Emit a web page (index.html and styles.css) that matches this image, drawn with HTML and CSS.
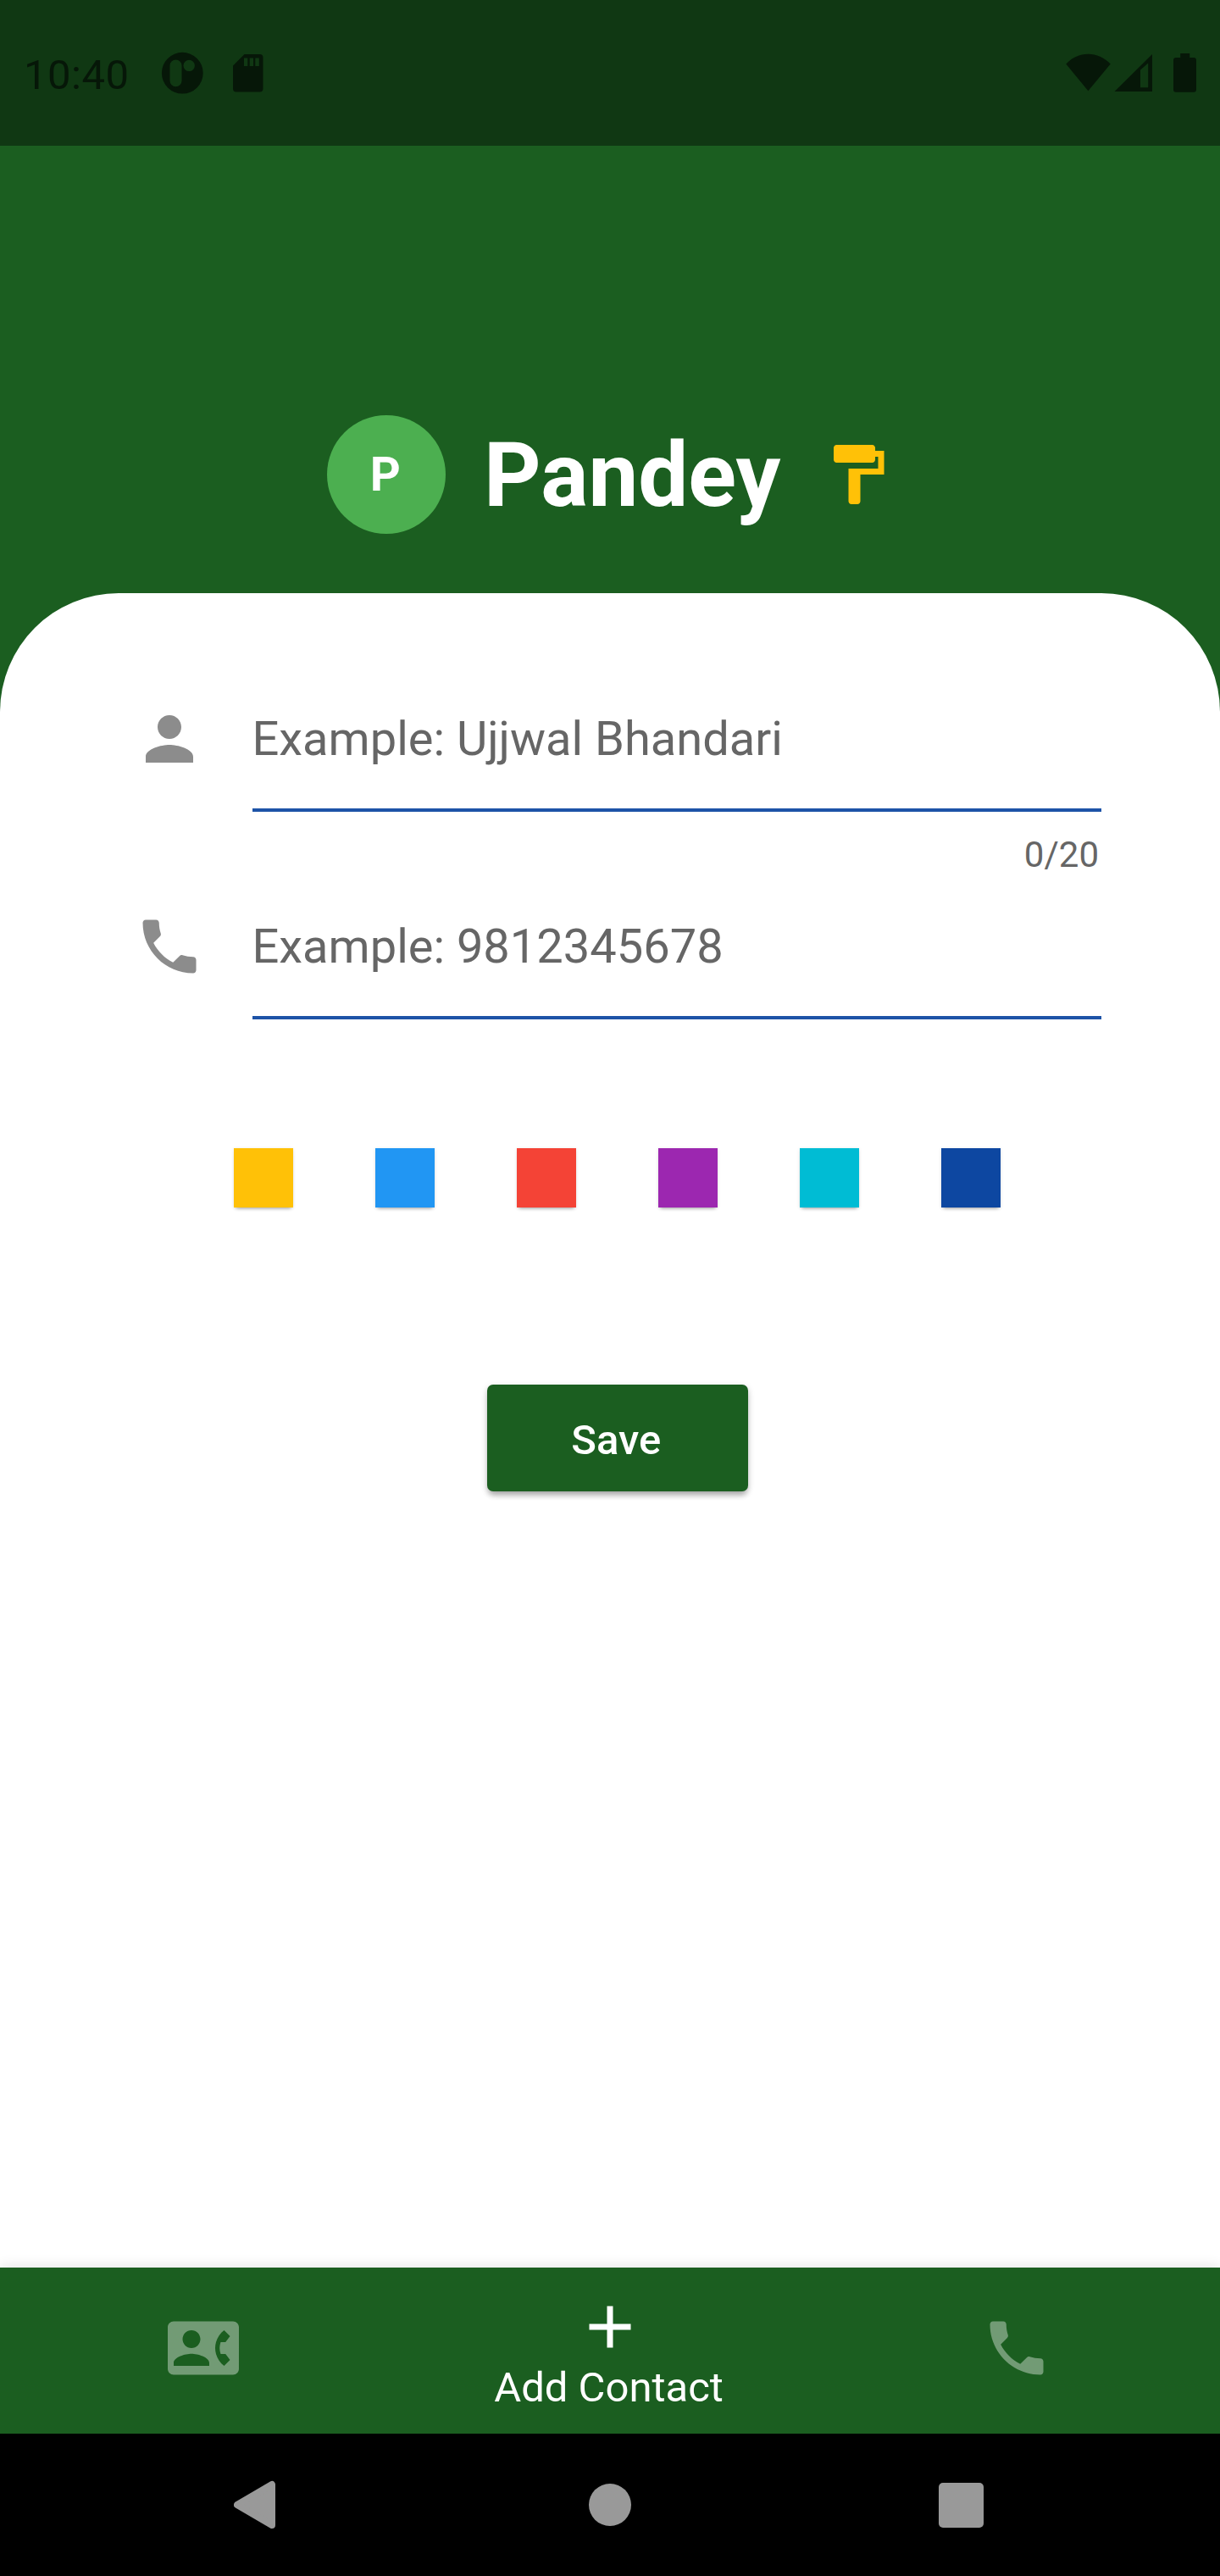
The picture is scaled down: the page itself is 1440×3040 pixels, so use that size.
FILE: index.html
```html
<!DOCTYPE html>
<html lang="en">
<head>
<meta charset="utf-8">
<title>Add Contact</title>
<link rel="stylesheet" href="styles.css">
</head>
<body>
<div class="screen">
  <div class="status-bar">
    <span class="clock">10:40</span>
    <svg class="status-left" width="104" height="50" viewBox="190 61 104 50">
      <path fill-rule="evenodd" d="M215.3 61.8a24.4 24.4 0 1 0 0 48.8a24.4 24.4 0 0 0 0-48.8zM207.5 70.5a7 7 0 0 1 7 7v17.800a7 7 0 0 1-14 0V77.500a7 7 0 0 1 7-7zM223.200 70.700a6.700 6.700 0 1 1 0 13.400a6.700 6.700 0 0 1 0-13.400z"/>
    </svg>
    <svg class="status-sd" width="36" height="46" viewBox="0 0 36 46">
      <path fill-rule="evenodd" d="M13.500 0H31.500A4 4 0 0 1 35.500 4V40.500A4 4 0 0 1 31.500 44.500H4A4 4 0 0 1 0 40.500V13.500zM13 4.500V14h4.300V4.500zM19.700 4.500V14H24V4.500zM26.300 4.500V14h4.500V4.500z"/>
    </svg>
    <svg class="status-right" width="154" height="46" viewBox="1258 63 154 46">
      <path d="M1258.300 75.500C1273 59.700 1296 59.700 1310.700 75.500L1284.400 107.300z"/>
      <path fill-rule="evenodd" d="M1315.500 108L1360 64V108zM1346 82.500V103.300H1355.200V74.500z"/>
      <path d="M1393.200 63h11v5H1409a3 3 0 0 1 3 3V105.800a3 3 0 0 1-3 3H1388a3 3 0 0 1-3-3V71a3 3 0 0 1 3-3H1393.200z"/>
    </svg>
  </div>

  <header class="header">
    <div class="avatar">P</div>
    <h1 class="title">Pandey</h1>
    <svg class="icon roller" viewBox="0 0 24 24"><path d="M18 4V3c0-.55-.45-1-1-1H5c-.55 0-1 .45-1 1v4c0 .55.45 1 1 1h12c.55 0 1-.45 1-1V6h1v4H9v11c0 .55.45 1 1 1h2c.55 0 1-.45 1-1v-9h8V4h-3z"/></svg>
  </header>

  <main class="panel">
    <div class="row">
      <svg class="icon field-icon" viewBox="0 0 24 24"><path d="M12 12c2.210 0 4-1.790 4-4s-1.790-4-4-4-4 1.790-4 4 1.790 4 4 4zm0 2c-2.670 0-8 1.340-8 4v2h16v-2c0-2.660-5.330-4-8-4z"/></svg>
      <div class="field">
        <div class="hint">Example: Ujjwal Bhandari</div>
        <div class="counter">0/20</div>
      </div>
    </div>
    <div class="row">
      <svg class="icon field-icon" viewBox="0 0 24 24"><path d="M6.620 10.790c1.440 2.830 3.760 5.140 6.590 6.590l2.200-2.200c.27-.27.67-.36 1.020-.24 1.120.37 2.330.57 3.570.57.55 0 1 .45 1 1V20c0 .55-.45 1-1 1-9.390 0-17-7.610-17-17 0-.55.45-1 1-1h3.500c.55 0 1 .45 1 1 0 1.250.2 2.450.57 3.570.11.35.03.74-.25 1.020l-2.200 2.200z"/></svg>
      <div class="field">
        <div class="hint">Example: 9812345678</div>
      </div>
    </div>
    <div class="swatches">
      <span class="swatch amber"></span>
      <span class="swatch blue"></span>
      <span class="swatch red"></span>
      <span class="swatch purple"></span>
      <span class="swatch cyan"></span>
      <span class="swatch navy"></span>
    </div>
    <button class="save" type="button">Save</button>
  </main>

  <nav class="tabs">
    <div class="tab">
      <svg class="icon" viewBox="0 0 24 24"><path d="M22 3H2C.9 3 0 3.900 0 5v14c0 1.100.9 2 2 2h20c1.100 0 1.990-.9 1.990-2L24 5c0-1.100-.9-2-2-2zM8 6c1.660 0 3 1.340 3 3s-1.340 3-3 3-3-1.340-3-3 1.340-3 3-3zm6 12H2v-1c0-2 4-3.100 6-3.100s6 1.100 6 3.100v1zm3.850-4h1.640L21 16l-1.990 1.990c-1.310-.98-2.280-2.380-2.730-3.990-.18-.64-.28-1.310-.28-2s.1-1.360.28-2c.45-1.620 1.420-3.010 2.730-3.990L21 8l-1.510 2h-1.640c-.22.63-.35 1.300-.35 2s.13 1.370.35 2z"/></svg>
    </div>
    <div class="tab active">
      <svg class="icon" viewBox="0 0 24 24"><path d="M19 13h-6v6h-2v-6H5v-2h6V5h2v6h6v2z"/></svg>
      <span class="tab-label">Add Contact</span>
    </div>
    <div class="tab">
      <svg class="icon" viewBox="0 0 24 24"><path d="M6.620 10.790c1.440 2.830 3.760 5.140 6.590 6.590l2.200-2.200c.27-.27.67-.36 1.020-.24 1.120.37 2.330.57 3.570.57.55 0 1 .45 1 1V20c0 .55-.45 1-1 1-9.390 0-17-7.610-17-17 0-.55.45-1 1-1h3.500c.55 0 1 .45 1 1 0 1.250.2 2.450.57 3.570.11.35.03.74-.25 1.020l-2.200 2.200z"/></svg>
    </div>
  </nav>

  <div class="system-nav">
    <svg width="50" height="58" viewBox="0 0 50 58"><path d="M4 29L45 5V53z" stroke-width="8" stroke-linejoin="round"/></svg>
    <span class="home"></span>
    <span class="recents"></span>
  </div>
</div>
</body>
</html>
```
FILE: styles.css
```css
* { box-sizing: border-box; }

body {
  margin: 0;
  font-family: Roboto, "Liberation Sans", sans-serif;
}

.screen {
  width: 1440px;
  height: 3040px;
  display: flex;
  flex-direction: column;
  overflow: hidden;
  background: #1b5e20;
}

.status-bar {
  height: 172px;
  flex: none;
  display: flex;
  align-items: flex-start;
  padding: 61px 28px 0;
  background: #103813;
  color: #061708;
  fill: #061708;
}

.clock {
  width: 162px;
  font-size: 49px;
  line-height: 56px;
  letter-spacing: .5px;
}

.status-left,
.status-right,
.status-sd { display: block; flex: none; }
.status-left { margin-right: -19px; }
.status-sd { margin-top: 3px; }
.status-right { margin: 2px 0 0 auto; }

.icon {
  display: block;
  width: 84px;
  height: 84px;
  flex: none;
}

.header {
  height: 528px;
  flex: none;
  display: flex;
  align-items: center;
  padding: 248px 0 0 385.700px;
}

.avatar {
  width: 140px;
  height: 140px;
  display: flex;
  align-items: center;
  justify-content: center;
  padding-right: 2px;
  border-radius: 50%;
  background: #4caf50;
  color: #fff;
  font-size: 56px;
  font-weight: 700;
}

.title {
  width: 398.600px;
  margin: 0 0 0 45.400px;
  padding-top: 2px;
  color: #fff;
  font-size: 105px;
  line-height: 123px;
  font-weight: 700;
}

.roller { fill: #ffc107; }

.panel {
  flex: 1;
  display: flex;
  flex-direction: column;
  padding: 87px 140px 0 157.500px;
  border-radius: 140px 140px 0 0;
  background: #fff;
}

.row {
  height: 245px;
  display: flex;
  gap: 56px;
}

.field-icon { margin-top: 43px; fill: #8c8c8c; }

.field { flex: 1; color: #666; }

.hint {
  height: 171px;
  padding-top: 52px;
  border-bottom: 4px solid #1d53a7;
  font-size: 56px;
  line-height: 66px;
}

.counter {
  margin-top: 26px;
  padding-right: 3px;
  text-align: right;
  font-size: 42px;
  line-height: 49px;
}

.swatches {
  display: flex;
  justify-content: space-between;
  margin-top: 78px;
  padding: 0 118.500px;
}

.swatch {
  width: 70px;
  height: 70px;
  box-shadow: 0 4px 4px -3px rgba(0, 0, 0, .3), 0 1px 4px rgba(0, 0, 0, .12);
}

.amber { background: #ffc107; }
.blue { background: #2196f3; }
.red { background: #f44336; }
.purple { background: #9c27b0; }
.cyan { background: #00bcd4; }
.navy { background: #0d47a1; }

.save {
  width: 308px;
  height: 126px;
  margin: 209.300px auto 0;
  padding: 4px 3px 0 0;
  border: 0;
  border-radius: 7px;
  background: #1b5e20;
  box-shadow: 0 7px 7px -3px rgba(0, 0, 0, .2), 0 4px 7px rgba(0, 0, 0, .14), 0 2px 10px rgba(0, 0, 0, .1);
  color: #fff;
  font: 500 49px Roboto, "Liberation Sans", sans-serif;
}

.tabs {
  height: 196px;
  flex: none;
  display: flex;
  justify-content: space-between;
  background: #1b5e20;
  box-shadow: 0 -2px 14px rgba(0, 0, 0, .1);
  fill: #fff;
}

.tab {
  width: 480px;
  display: flex;
  flex-direction: column;
  align-items: center;
  padding-top: 52.500px;
}

.tab .icon { opacity: .38; }
.tab.active { padding-top: 28px; }
.tab.active .icon { opacity: 1; }

.tab-label {
  padding-right: 3px;
  color: #fff;
  font-size: 49px;
  line-height: 60px;
}

.system-nav {
  height: 168px;
  flex: none;
  display: flex;
  align-items: center;
  padding-left: 276px;
  background: #000;
  fill: #999;
  stroke: #999;
}

.home {
  width: 50px;
  height: 50px;
  margin-left: 369px;
  border-radius: 50%;
  background: #999;
}

.recents {
  width: 53px;
  height: 53px;
  margin-left: 363px;
  border-radius: 5px;
  background: #999;
}
```
